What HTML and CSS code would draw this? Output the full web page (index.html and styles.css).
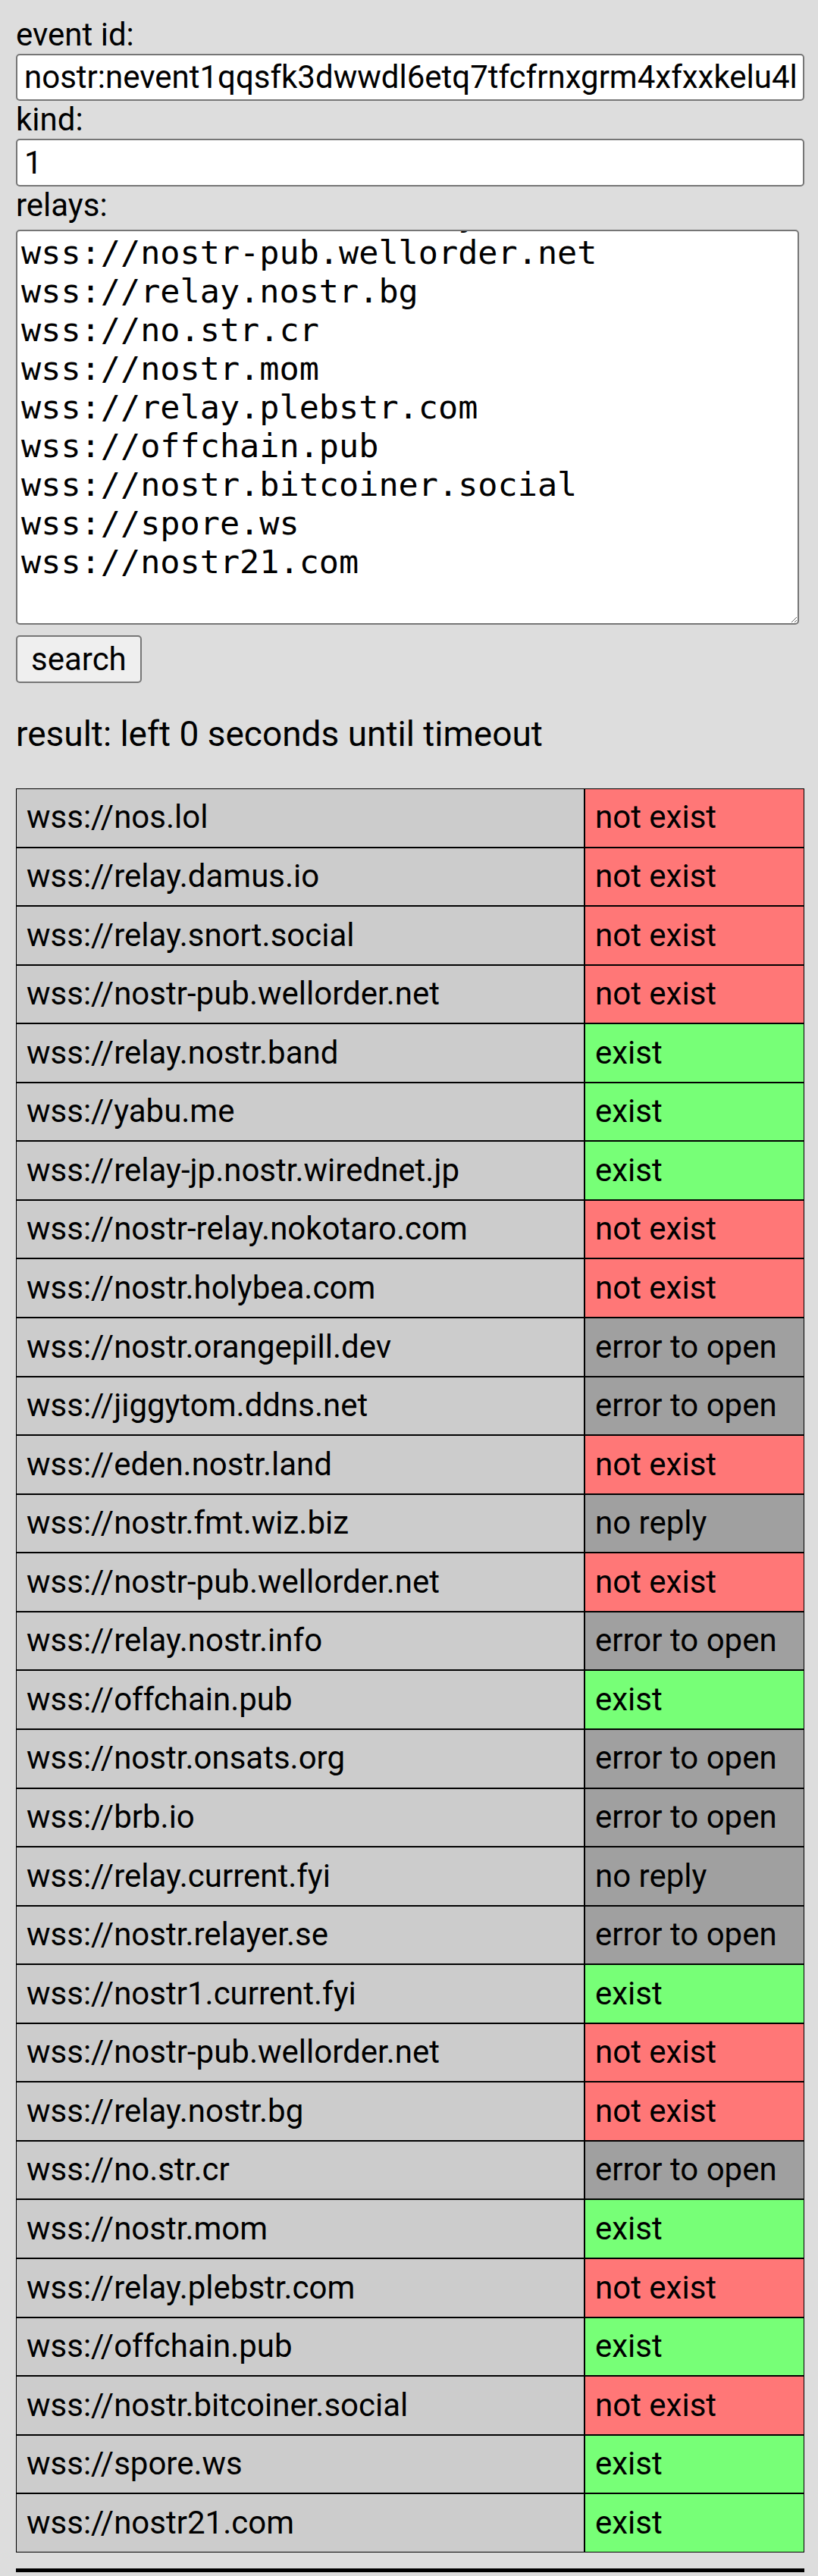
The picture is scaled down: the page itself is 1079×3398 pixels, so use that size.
FILE: index.html
```html
<!DOCTYPE html>
<html lang="en">
<head>
<meta charset="utf-8">
<title>nostr event search</title>
<link rel="stylesheet" href="styles.css">
</head>
<body>
<div class="form">
  <label class="field-label" for="eid">event id:</label>
  <input id="eid" class="text-input" type="text" value="nostr:nevent1qqsfk3dwwdl6etq7tfcfrnxgrm4xfxxkelu4lqgsw9kv">
  <label class="field-label" for="kind">kind:</label>
  <input id="kind" class="text-input kind-input" type="text" value="1">
  <label class="field-label relays-label" for="relays">relays:</label>
  <textarea id="relays" class="relays" spellcheck="false">wss://nos.lol
wss://relay.damus.io
wss://relay.snort.social
wss://nostr-pub.wellorder.net
wss://relay.nostr.band
wss://yabu.me
wss://relay-jp.nostr.wirednet.jp
wss://nostr-relay.nokotaro.com
wss://nostr.holybea.com
wss://nostr.orangepill.dev
wss://jiggytom.ddns.net
wss://eden.nostr.land
wss://nostr.fmt.wiz.biz
wss://nostr-pub.wellorder.net
wss://relay.nostr.info
wss://offchain.pub
wss://nostr.onsats.org
wss://brb.io
wss://relay.current.fyi
wss://nostr.relayer.se
wss://nostr1.current.fyi
wss://nostr-pub.wellorder.net
wss://relay.nostr.bg
wss://no.str.cr
wss://nostr.mom
wss://relay.plebstr.com
wss://offchain.pub
wss://nostr.bitcoiner.social
wss://spore.ws
wss://nostr21.com
</textarea>
  <button class="search-btn" type="button">search</button>
</div>
<p class="result">result: left 0 seconds until timeout</p>
<table class="results">
  <tbody>
    <tr><td class="url">wss://nos.lol</td><td class="status no">not exist</td></tr>
    <tr><td class="url">wss://relay.damus.io</td><td class="status no">not exist</td></tr>
    <tr><td class="url">wss://relay.snort.social</td><td class="status no">not exist</td></tr>
    <tr><td class="url">wss://nostr-pub.wellorder.net</td><td class="status no">not exist</td></tr>
    <tr><td class="url">wss://relay.nostr.band</td><td class="status yes">exist</td></tr>
    <tr><td class="url">wss://yabu.me</td><td class="status yes">exist</td></tr>
    <tr><td class="url">wss://relay-jp.nostr.wirednet.jp</td><td class="status yes">exist</td></tr>
    <tr><td class="url">wss://nostr-relay.nokotaro.com</td><td class="status no">not exist</td></tr>
    <tr><td class="url">wss://nostr.holybea.com</td><td class="status no">not exist</td></tr>
    <tr><td class="url">wss://nostr.orangepill.dev</td><td class="status err">error to open</td></tr>
    <tr><td class="url">wss://jiggytom.ddns.net</td><td class="status err">error to open</td></tr>
    <tr><td class="url">wss://eden.nostr.land</td><td class="status no">not exist</td></tr>
    <tr><td class="url">wss://nostr.fmt.wiz.biz</td><td class="status err">no reply</td></tr>
    <tr><td class="url">wss://nostr-pub.wellorder.net</td><td class="status no">not exist</td></tr>
    <tr><td class="url">wss://relay.nostr.info</td><td class="status err">error to open</td></tr>
    <tr><td class="url">wss://offchain.pub</td><td class="status yes">exist</td></tr>
    <tr><td class="url">wss://nostr.onsats.org</td><td class="status err">error to open</td></tr>
    <tr><td class="url">wss://brb.io</td><td class="status err">error to open</td></tr>
    <tr><td class="url">wss://relay.current.fyi</td><td class="status err">no reply</td></tr>
    <tr><td class="url">wss://nostr.relayer.se</td><td class="status err">error to open</td></tr>
    <tr><td class="url">wss://nostr1.current.fyi</td><td class="status yes">exist</td></tr>
    <tr><td class="url">wss://nostr-pub.wellorder.net</td><td class="status no">not exist</td></tr>
    <tr><td class="url">wss://relay.nostr.bg</td><td class="status no">not exist</td></tr>
    <tr><td class="url">wss://no.str.cr</td><td class="status err">error to open</td></tr>
    <tr><td class="url">wss://nostr.mom</td><td class="status yes">exist</td></tr>
    <tr><td class="url">wss://relay.plebstr.com</td><td class="status no">not exist</td></tr>
    <tr><td class="url">wss://offchain.pub</td><td class="status yes">exist</td></tr>
    <tr><td class="url">wss://nostr.bitcoiner.social</td><td class="status no">not exist</td></tr>
    <tr><td class="url">wss://spore.ws</td><td class="status yes">exist</td></tr>
    <tr><td class="url">wss://nostr21.com</td><td class="status yes">exist</td></tr>
  </tbody>
</table>
<div class="rule"></div>
<script src="script.js"></script>
</body>
</html>
```

FILE: styles.css
```css
html {
  background: #dddddd;
}

body {
  margin: 21px 18px 0 21px;
  background: #dddddd;
  color: #000;
  font-family: Roboto, "Noto Sans", sans-serif;
  font-size: 42px;
}

.form {
  display: flex;
  flex-direction: column;
  align-items: flex-start;
}

.field-label {
  display: block;
  line-height: 49.7px;
}

.text-input {
  display: block;
  width: 100%;
  height: 62px;
  box-sizing: border-box;
  margin: 0;
  padding: 0 9px;
  border: 2px solid #767676;
  border-radius: 5px;
  background: #fff;
  color: #000;
  font-family: Roboto, "Noto Sans", sans-serif;
  font-size: 42px;
  outline: none;
}

.kind-input {
  margin-top: 1px;
  height: 63px;
}

.relays-label {
  margin-bottom: 6.8px;
}

.relays {
  display: block;
  width: calc(100% - 7px);
  height: 521.4px;
  box-sizing: border-box;
  margin: 0;
  padding: 4.5px 5px;
  border: 2px solid #767676;
  border-radius: 5px;
  background: #fff;
  color: #000;
  font-family: "DejaVu Sans Mono", "Liberation Mono", monospace;
  font-size: 43.5px;
  line-height: 50.9px;
  white-space: pre;
  overflow: hidden;
  outline: none;
}

.search-btn {
  margin-top: 13.7px;
  height: 63px;
  box-sizing: border-box;
  padding: 0 18px;
  border: 2px solid #767676;
  border-radius: 5px;
  background: #efefef;
  color: #000;
  font-family: Roboto, "Noto Sans", sans-serif;
  font-size: 42px;
}

.result {
  margin: 41.3px 0 43.8px;
  font-size: 46px;
  line-height: 53.9px;
}

.results {
  width: 100%;
  border-collapse: separate;
  border-spacing: 0;
}

.results td {
  border: 1px solid #000;
  padding: 12.5px 13px 13.5px;
  line-height: 49.56px;
  font-size: 42px;
  white-space: nowrap;
}

.url {
  background: #cccccc;
}

.status {
  width: 262px;
}

.status.no {
  background: #ff7777;
}

.status.yes {
  background: #77ff77;
}

.status.err {
  background: #a0a0a0;
}

.rule {
  margin-top: 21.6px;
  height: 4.4px;
  background: #000;
}
```

FILE: script.js
```js
var relays = document.getElementById('relays');
relays.scrollTop = relays.scrollHeight;
```
